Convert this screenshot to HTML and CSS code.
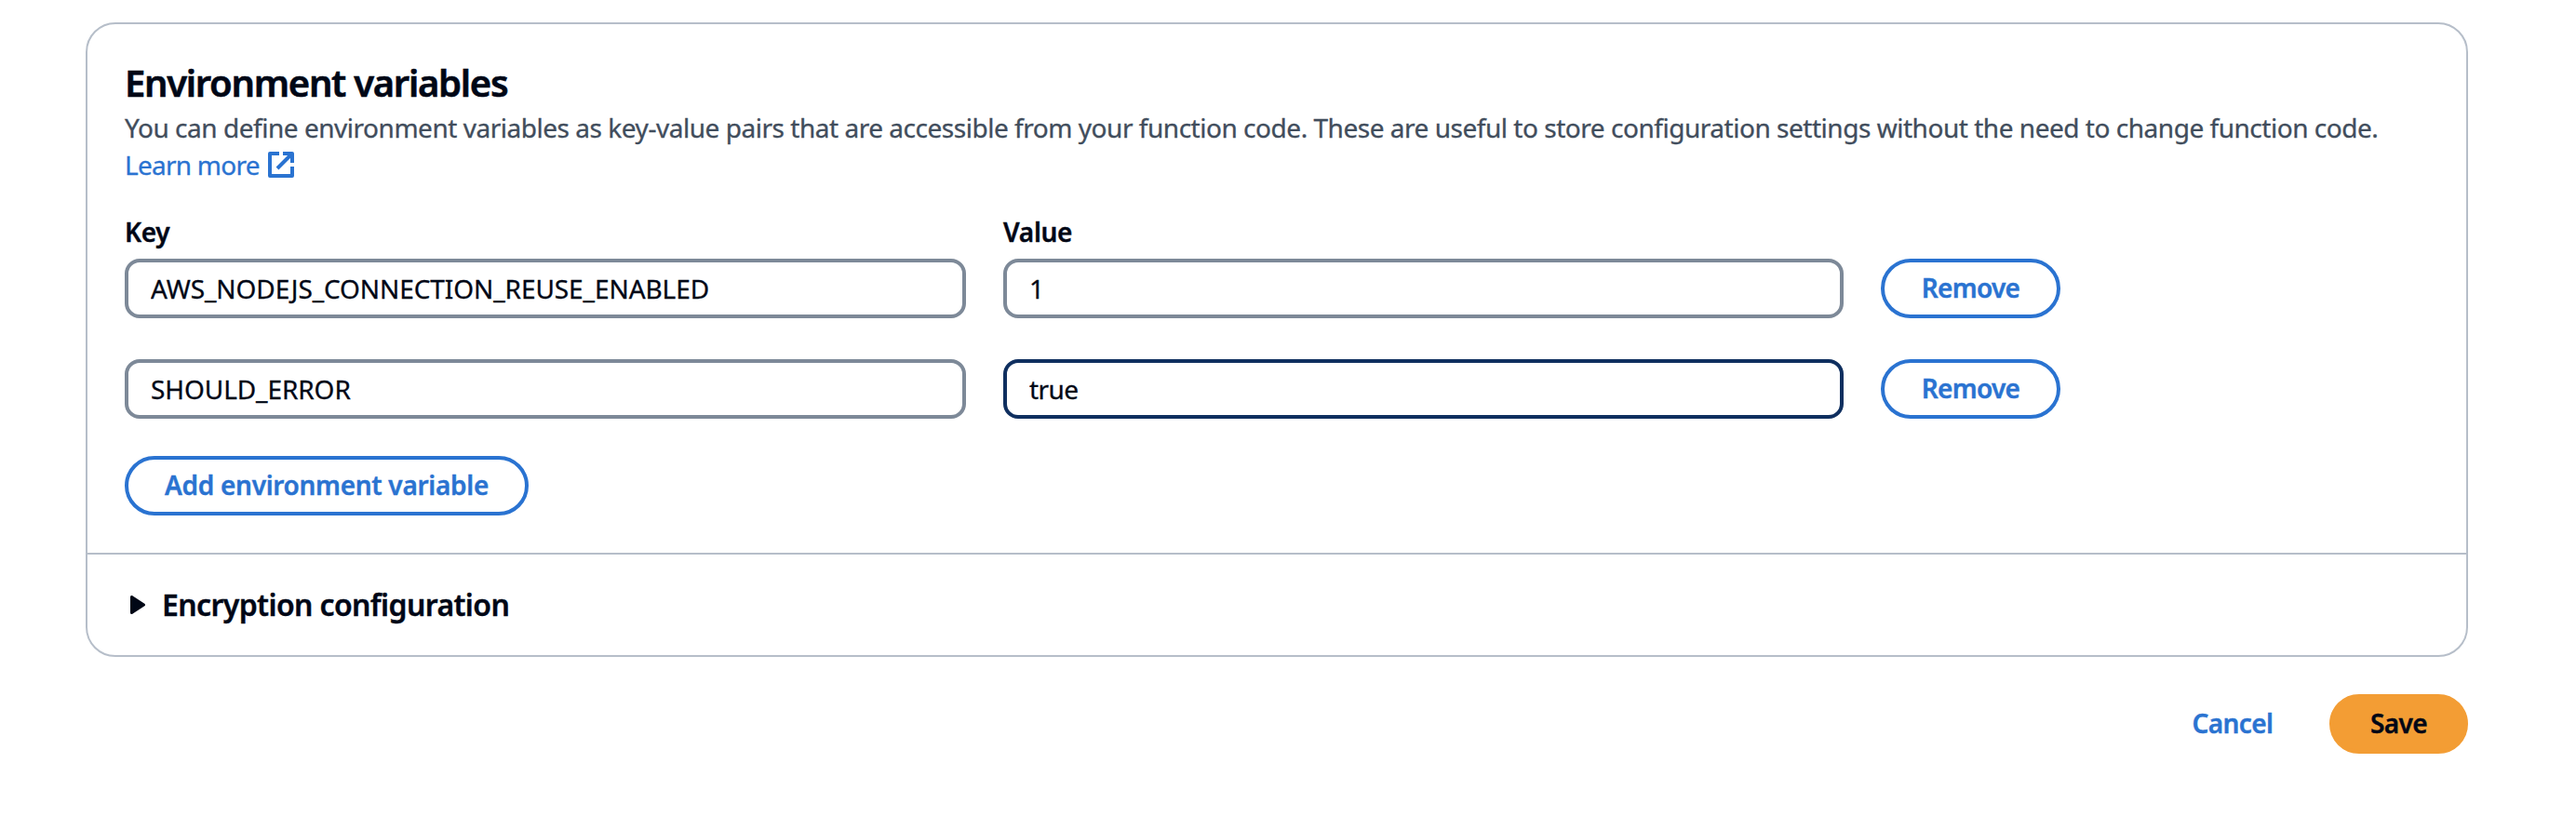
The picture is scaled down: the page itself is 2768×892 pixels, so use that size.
FILE: index.html
```html
<!DOCTYPE html>
<html lang="en">
<head>
<meta charset="utf-8">
<title>Edit environment variables</title>
<link rel="stylesheet" href="styles.css">
</head>
<body>
<form class="page">
  <section class="card">
    <div class="card-body">
      <h2 class="title">Environment variables</h2>
      <p class="description">You can define environment variables as key-value pairs that are accessible from your function code. These are useful to store configuration settings without the need to change function code.</p>
      <a class="learn-more" href="#"><span>Learn more</span>
        <svg class="external-icon" viewBox="0 0 28 28" aria-hidden="true"><path d="M12 2H2v24h24V16M16 2h10v10M10 18 25 3"/></svg>
      </a>
      <div class="grid">
        <label class="label key-label" for="k1">Key</label>
        <label class="label value-label" for="v1">Value</label>
        <span></span>
        <input class="input" id="k1" type="text" value="AWS_NODEJS_CONNECTION_REUSE_ENABLED" spellcheck="false">
        <input class="input" id="v1" type="text" value="1">
        <button class="button remove" type="button">Remove</button>
        <input class="input second" type="text" value="SHOULD_ERROR" spellcheck="false">
        <input class="input second active" type="text" value="true">
        <button class="button remove second" type="button">Remove</button>
      </div>
      <button class="button add" type="button">Add environment variable</button>
    </div>
    <div class="expander">
      <svg class="caret" viewBox="0 0 16 20" aria-hidden="true"><path d="M1.5 1.5v17L14.5 10z"/></svg>
      <h3 class="expander-title">Encryption configuration</h3>
    </div>
  </section>
  <div class="actions">
    <button class="button cancel" type="button">Cancel</button>
    <button class="button save" type="button">Save</button>
  </div>
</form>
</body>
</html>
```
FILE: styles.css
```css
* { box-sizing: border-box; }

body {
  margin: 0;
  background: #fff;
  color: #000716;
  font: 400 28px/40px "Noto Sans", "Open Sans", sans-serif;
  -webkit-text-stroke: 0.3px currentColor;
}

.page { padding: 24px 116px 82px 92px; }

.card {
  border: 2px solid #b6bec9;
  border-radius: 32px;
}

.card-body { padding: 39px 40px 40px; }

.title {
  margin: 0 0 4px;
  font-size: 40px;
  font-weight: 600;
  line-height: 48px;
  letter-spacing: -1.3px;
  -webkit-text-stroke-width: 0.6px;
}

.description {
  margin: 0;
  color: #414d5c;
  letter-spacing: -0.47px;
  white-space: nowrap;
}

.learn-more {
  display: flex;
  align-items: center;
  gap: 9px;
  width: max-content;
  color: #2a73d1;
  text-decoration: none;
  letter-spacing: -0.75px;
}

.external-icon {
  width: 28px;
  height: 28px;
  fill: none;
  stroke: #2a73d1;
  stroke-width: 4;
  stroke-linejoin: round;
}

.grid {
  display: grid;
  grid-template-columns: 904px 903px 193px;
  column-gap: 40px;
  margin-top: 32px;
}

.label {
  height: 49px;
  font-weight: 600;
  letter-spacing: -0.3px;
}

.input {
  width: 100%;
  height: 64px;
  padding: 0 24px;
  border: 4px solid #7d8998;
  border-radius: 16px;
  background: #fff;
  color: #000716;
  font: inherit;
  letter-spacing: -0.08px;
  outline: none;
}

.input.active {
  border-color: #0f2f5f;
  letter-spacing: -0.6px;
}

.second { margin-top: 44px; }

.button {
  height: 64px;
  padding: 0 0 2px;
  border: 4px solid #2a73d1;
  border-radius: 32px;
  background: #fff;
  color: #2a73d1;
  font: inherit;
  font-weight: 600;
  letter-spacing: -0.3px;
}

.remove { letter-spacing: -0.7px; }

.add {
  display: block;
  width: 434px;
  margin-top: 40px;
}

.expander {
  display: flex;
  align-items: center;
  gap: 18px;
  height: 110px;
  padding-left: 46px;
  border-top: 2px solid #b6bec9;
}

.caret {
  width: 16px;
  height: 20px;
  fill: #000716;
  stroke: #000716;
  stroke-width: 3;
  stroke-linejoin: round;
}

.expander-title {
  margin: 0;
  font-size: 32px;
  font-weight: 600;
  letter-spacing: -0.62px;
}

.label,
.button,
.expander-title { -webkit-text-stroke-width: 0.4px; }

.actions {
  display: flex;
  justify-content: flex-end;
  gap: 16px;
  margin-top: 40px;
}

.cancel {
  width: 176px;
  border-color: transparent;
  letter-spacing: -0.6px;
}

.save {
  width: 149px;
  border-color: #f39d34;
  background: #f39d34;
  color: #000716;
  letter-spacing: -0.6px;
}
```
